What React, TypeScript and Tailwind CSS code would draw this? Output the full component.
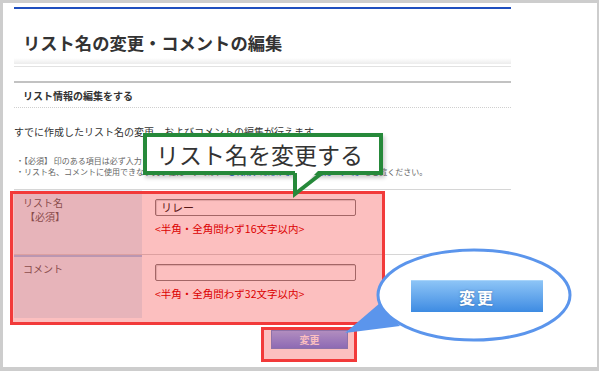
const jp = { fontFamily: '"Noto Sans CJK JP", "Noto Sans", sans-serif' };

function FormRow({
  label,
  required,
  value,
  hint,
  first,
}: {
  label: string;
  required?: boolean;
  value: string;
  hint: string;
  first?: boolean;
}) {
  return (
    <div
      className={
        first
          ? "flex h-[65px] border-t border-[#d6d6d6]"
          : "flex h-[64px] border-t border-[#d6d6d6]"
      }
    >
      <div
        className={
          first
            ? "w-[128px] bg-[#e3f1f9] pl-[9px] pt-[6px] text-[10px] leading-[14px] text-[#666]"
            : "w-[128px] border-t-2 border-[#a8c8ec] bg-[#e3f1f9] pl-[9px] pt-[5px] text-[10px] leading-[14px] text-[#666]"
        }
      >
        <div>{label}</div>
        {required && <div className="pl-[2px]">【必須】</div>}
      </div>
      <div className="flex-1 pl-[13px] pt-[9px]">
        <div className="flex h-[17px] w-[201px] items-center rounded-[2px] border border-[#888] bg-white pl-[5px] text-[11px] text-[#222] shadow-[inset_1px_1px_1px_rgba(0,0,0,0.15)]">
          {value}
        </div>
        <div className="mt-[6px] text-[10.5px] leading-[14px] text-[#d40000]">{hint}</div>
      </div>
    </div>
  );
}

export default function App() {
  return (
    <div
      className="relative h-[371px] w-[599px] overflow-hidden bg-[#cdcdcd] pb-[4px] pl-[3px] pr-[2px] pt-[3px]"
      style={jp}
    >
      <div className="h-full w-full bg-white pl-[11px]">
        <div className="w-[497px]">
          <div className="h-[4px]" />
          <div className="h-[2px] bg-[#1f4fbf]" />
          <div className="h-[49px] pl-[9px] pt-[24px] text-[17.3px] font-bold leading-[20px] text-[#333]">
            リスト名の変更・コメントの編集
          </div>
          <div className="h-[6px] bg-gradient-to-b from-white to-[#ececec]" />
          <div className="h-[2px]" />
          <div className="h-px bg-[#e2e2e2]" />
          <div className="h-[14px]" />
          <div className="h-[2px] bg-[#c2c2c2]" />
          <div className="flex h-[25px] items-center border-b border-dotted border-[#cfcfcf] pl-[9px] text-[10px] font-bold text-[#333]">
            リスト情報の編集をする
          </div>
          <p className="mt-[17px] text-[10px] leading-[14px] text-[#333]">
            すでに作成したリスト名の変更、およびコメントの編集が行えます。
          </p>
          <div className="mt-[16px] pl-[2px] text-[8px] leading-[11px] text-[#666]">
            <div>・【必須】 印のある項目は必ず入力してください。</div>
            <div>
              ・リスト名、コメントに使用できない文字種については、
              <span className="text-[#1a5fc8]">「ご利用いただけない文字種について」</span>
              をご覧ください。
            </div>
          </div>
          <div className="mt-[12px]">
            <FormRow
              first
              label="リスト名"
              required
              value="リレー"
              hint="<半角・全角問わず16文字以内>"
            />
            <FormRow label="コメント" value="" hint="<半角・全角問わず32文字以内>" />
          </div>
          <div className="mt-[12px] pl-[257px]">
            <div className="flex h-[19px] w-[77px] items-center justify-center border border-[#6d98e0] bg-gradient-to-b from-[#9cbcff] to-[#6c8ef0] text-[10px] font-bold text-white">
              変更
            </div>
          </div>
        </div>
      </div>

      {/* red highlight over the form */}
      <div className="absolute left-[10px] top-[191px] h-[134px] w-[375px] border-[3px] border-[#f23a3a] bg-[rgba(244,0,0,0.25)]" />
      {/* red highlight over the small button */}
      <div className="absolute left-[261px] top-[327px] h-[35px] w-[96px] border-[3px] border-[#f23a3a] bg-[rgba(244,0,0,0.25)]" />

      {/* green callout */}
      <div className="absolute left-[143px] top-[133px] flex h-[42px] w-[240px] items-center border-4 border-[#26893a] bg-white pl-[9px] text-[23px] leading-none text-[#333] shadow-[2px_3px_4px_rgba(0,0,0,0.2)]">
        リスト名を変更する
      </div>
      <svg className="absolute left-[288px] top-[167px]" width="40" height="32" viewBox="0 0 40 32">
        <polygon points="7,0 7,27 34,0" fill="#fff" />
        <path d="M7 6 L7 27 L34 6" fill="none" stroke="#26893a" strokeWidth="4" strokeLinejoin="miter" />
      </svg>

      {/* blue zoom bubble */}
      <svg className="absolute left-[330px] top-[240px]" width="250" height="110" viewBox="0 0 250 110">
        <polygon points="15,93 50,63 70,86" fill="#5b95ec" />
        <ellipse cx="144" cy="55" rx="96" ry="45" fill="#fff" stroke="#5b95ec" strokeWidth="3" />
      </svg>
      <div className="absolute left-[411px] top-[280px] flex h-[32px] w-[132px] items-center justify-center border-t border-[#a8d4fa] bg-gradient-to-b from-[#8cc4f6] to-[#3d8be2] text-[16px] font-bold tracking-[2px] text-white [text-shadow:0_0_2px_rgba(40,70,120,0.6)]">
        変更
      </div>
    </div>
  );
}
